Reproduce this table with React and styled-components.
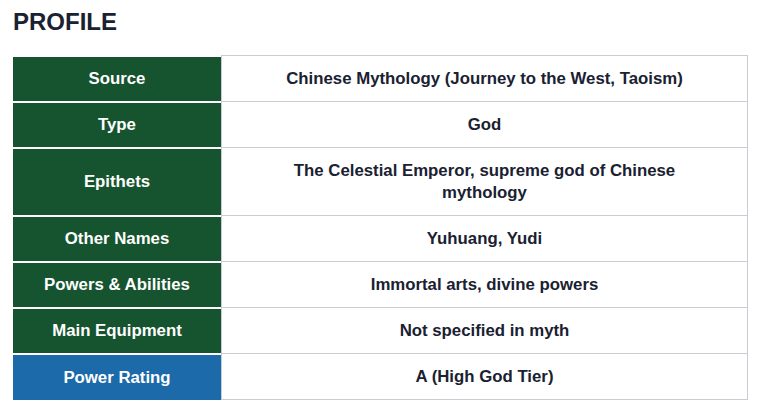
import styled, { createGlobalStyle } from 'styled-components';

const GlobalStyle = createGlobalStyle`
  body {
    margin: 0;
    background: #ffffff;
    font-family: "Liberation Sans", Arial, sans-serif;
  }
`;

const Page = styled.div`
  padding: 8px 13px;
`;

const Title = styled.h2`
  margin: 0 0 19px;
  font-size: 24px;
  line-height: 28px;
  font-weight: 700;
  color: #1a2131;
`;

const Table = styled.div`
  width: 735px;
  display: flex;
  flex-direction: column;
`;

const Row = styled.div`
  display: grid;
  grid-template-columns: 208px 1fr;
`;

const Label = styled.div`
  display: flex;
  align-items: center;
  justify-content: center;
  border-top: 2px solid #ffffff;
  background: ${(props) => (props.highlight ? '#1c6aa9' : '#16532f')};
  color: #ffffff;
  font-size: 16.8px;
  line-height: 22px;
  font-weight: 700;
  text-align: center;
`;

const Value = styled.div`
  padding: 11.5px 48px;
  border: 1px solid #c9ccd3;
  border-bottom: ${(props) => (props.last ? '1px solid #c9ccd3' : 'none')};
  color: #1a2131;
  font-size: 16.8px;
  line-height: 22px;
  font-weight: 700;
  text-align: center;
`;

const rows = [
  ['Source', 'Chinese Mythology (Journey to the West, Taoism)'],
  ['Type', 'God'],
  ['Epithets', 'The Celestial Emperor, supreme god of Chinese mythology'],
  ['Other Names', 'Yuhuang, Yudi'],
  ['Powers & Abilities', 'Immortal arts, divine powers'],
  ['Main Equipment', 'Not specified in myth'],
  ['Power Rating', 'A (High God Tier)'],
];

export default function App() {
  return (
    <Page>
      <GlobalStyle />
      <Title>PROFILE</Title>
      <Table>
        {rows.map(([label, value], index) => (
          <Row key={label}>
            <Label highlight={label === 'Power Rating'}>{label}</Label>
            <Value last={index === rows.length - 1}>{value}</Value>
          </Row>
        ))}
      </Table>
    </Page>
  );
}
